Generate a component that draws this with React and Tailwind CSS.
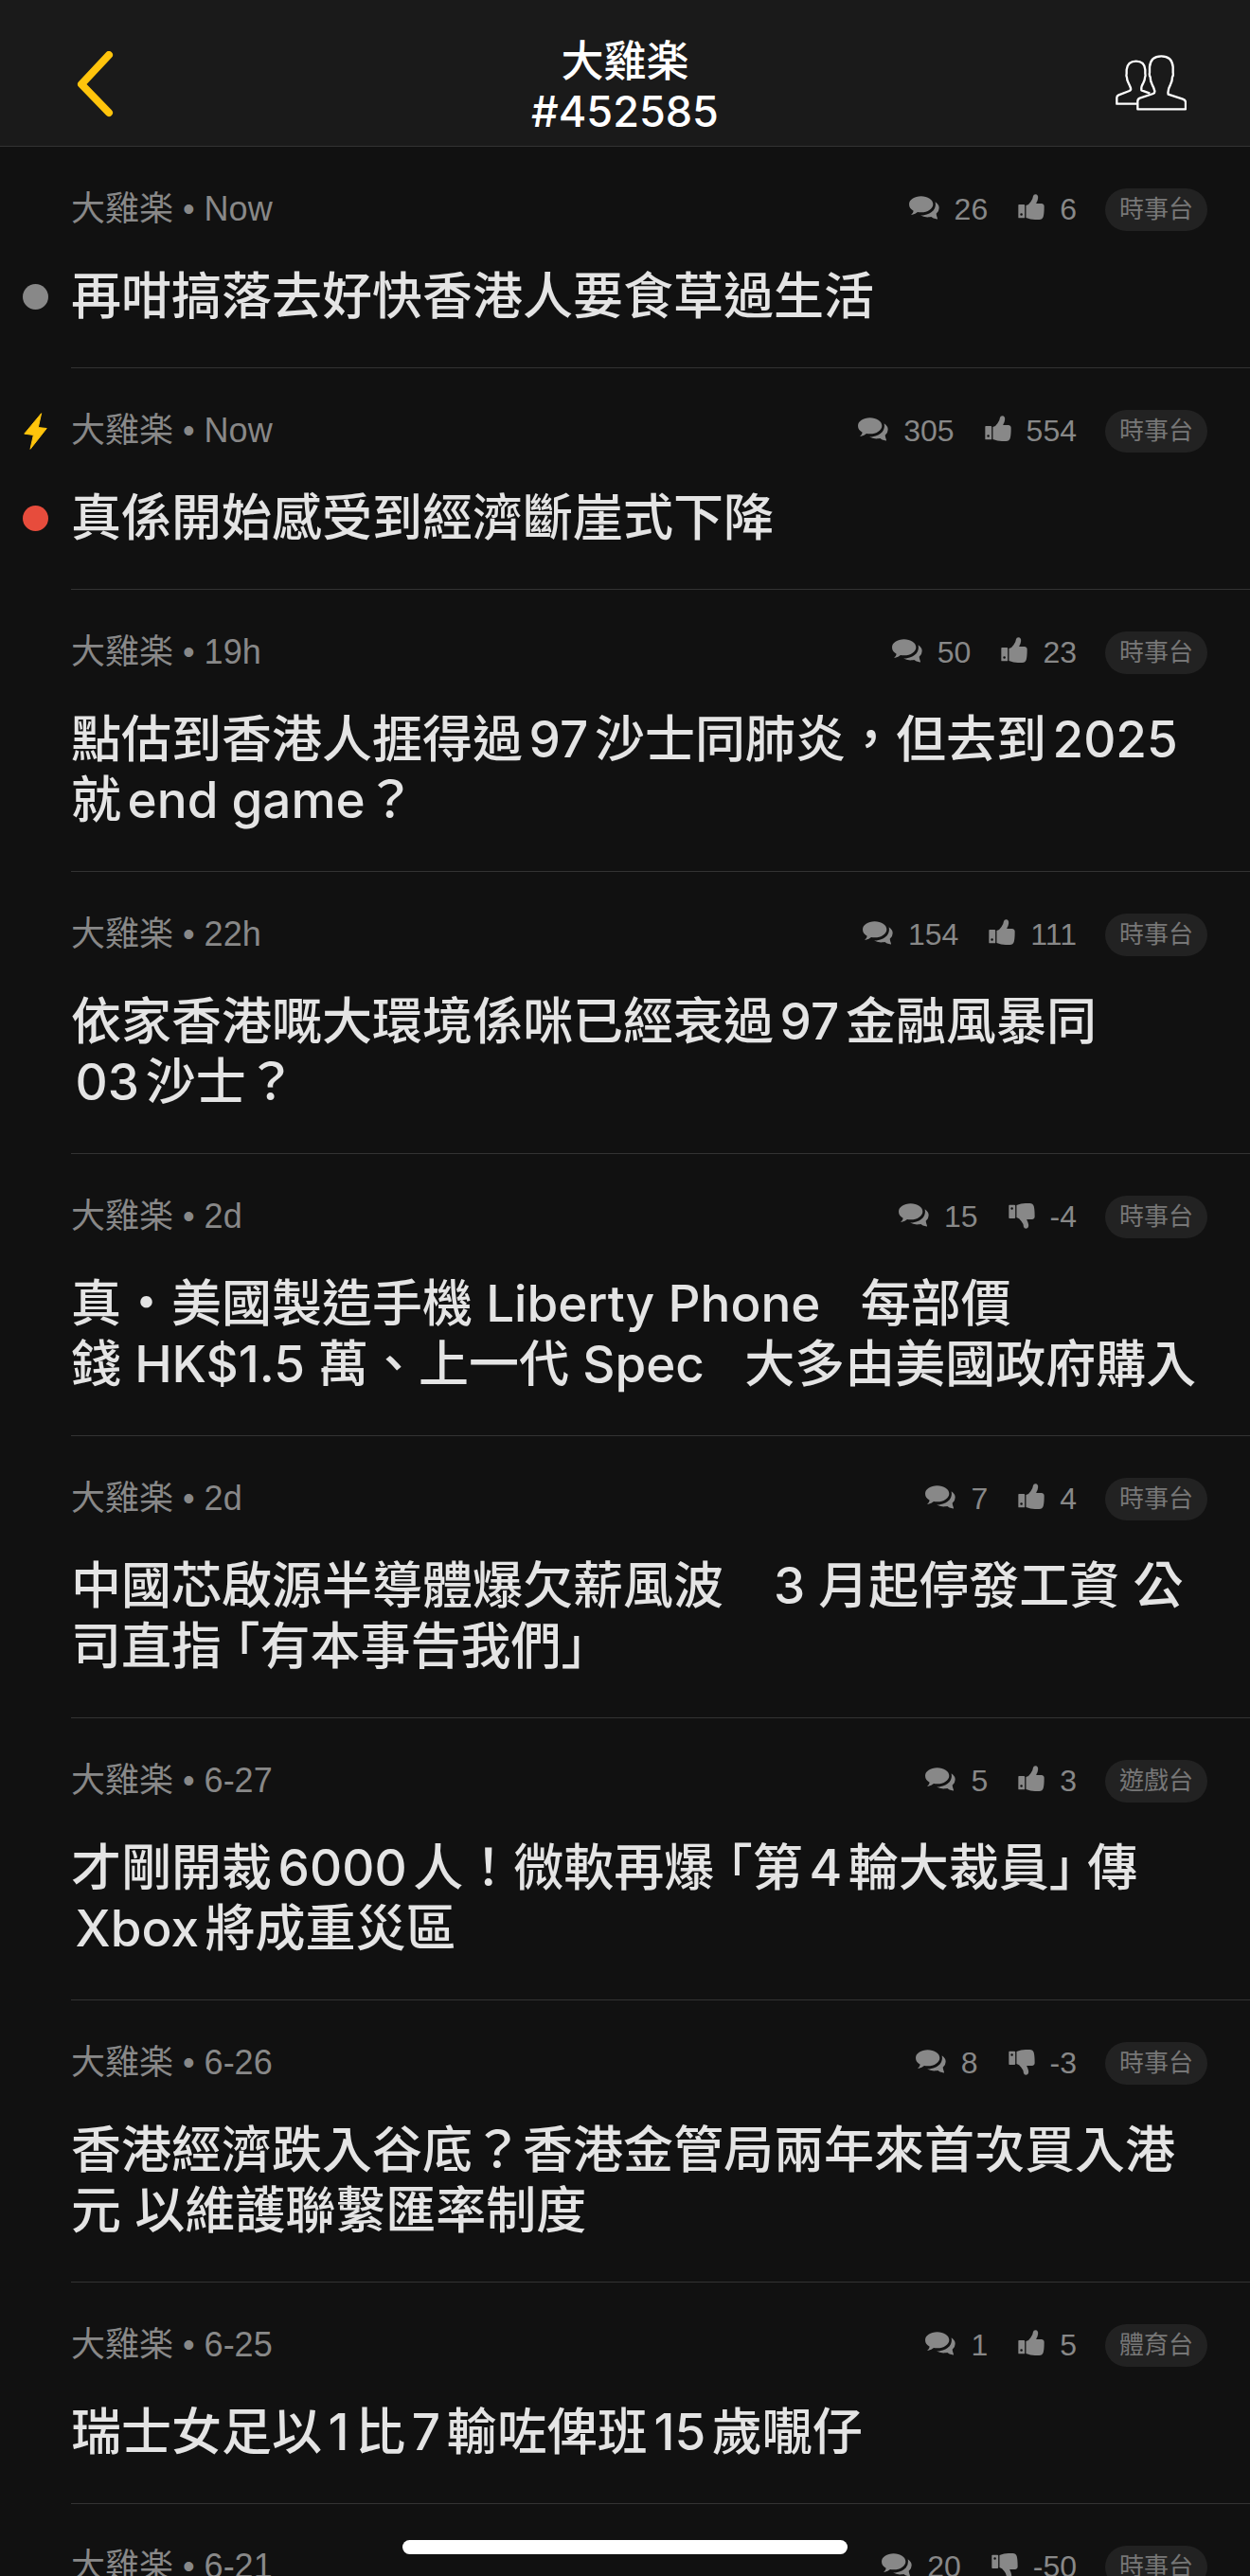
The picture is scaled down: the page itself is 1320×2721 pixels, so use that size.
import React from 'react';

const posts = [
    { id: 1, time: 'Now', comments: 26, votes: 6, board: '時事台', dot: 'read', title: ['再咁搞落去好快香港人要食草過生活'] },
    { id: 2, time: 'Now', comments: 305, votes: 554, board: '時事台', dot: 'unread', hot: true, title: ['真係開始感受到經濟斷崖式下降'] },
    { id: 3, time: '19h', comments: 50, votes: 23, board: '時事台', title: ['點估到香港人捱得過97沙士同肺炎，但去到2025', '就end game？'] },
    { id: 4, time: '22h', comments: 154, votes: 111, board: '時事台', title: ['依家香港嘅大環境係咪已經衰過97金融風暴同', '\u200a03沙士？'] },
    { id: 5, time: '2d', comments: 15, votes: -4, board: '時事台', title: ['真・美國製造手機 Liberty Phone\u00a0\u00a0 每部價', '錢 HK$1.5 萬、上一代 Spec\u00a0\u00a0 大多由美國政府購入'] },
    { id: 6, time: '2d', comments: 7, votes: 4, board: '時事台', title: ['中國芯啟源半導體爆欠薪風波\u30003 月起停發工資 公', '司直指「有本事告我們」'] },
    { id: 7, time: '6-27', comments: 5, votes: 3, board: '遊戲台', title: ['才剛開裁6000人！微軟再爆「第4輪大裁員」傳', '\u200aXbox將成重災區'] },
    { id: 8, time: '6-26', comments: 8, votes: -3, board: '時事台', title: ['香港經濟跌入谷底？香港金管局兩年來首次買入港', '元 以維護聯繫匯率制度'] },
    { id: 9, time: '6-25', comments: 1, votes: 5, board: '體育台', title: ['瑞士女足以1比7輸咗俾班15歲𡃁仔'] },
    { id: 10, time: '6-21', comments: 20, votes: -50, board: '時事台', title: [] },
];

const CommentsIcon = () => (
    <svg viewBox="20 36 96 75" className="w-8 h-[25px] mb-1" fill="currentColor" aria-hidden="true">
        <path d="M58 37c21 0 38 11 38 25S79 88 58 88q-6 0-11-1-6 6-19 9-2 0 0-2 5-5 6-11Q20 75 20 62c0-14 17-25 38-25z" />
        <path d="M103 55q12 8 12 19 0 11-9 18 1 8 4 15 0 4-4 2-10-2-16-7-4 1-8 1-16 1-27-6 6 1 12 0 19-3 30-15 9-11 6-27z" />
    </svg>
);

const ThumbIcon = ({ down }) => (
    <svg viewBox="36 28 84 83" className={down ? 'w-7 h-[27px] mb-0.5 -scale-y-100' : 'w-7 h-[27px] mb-1.5'} fill="currentColor" aria-hidden="true">
        <path fillRule="evenodd" d="M38 62h16q3 0 3 3v38q0 3-3 3H38q-2 0-2-3V65q0-3 2-3zm8 28a4 4 0 1 0 0 8 4 4 0 1 0 0-8z" />
        <path d="M61 65q9-2 15-12 7-8 8-18 1-6 8-6 9 1 8 12-1 8-5 15l-1 3h17q9 1 9 9 0 24-3 34-3 9-13 9H90q-14 0-29-6z" />
    </svg>
);

// Corner brackets sit half-width, tight against the quoted words
const TitleLine = ({ text }) => (
    <span className="block">
        {text.split(/([「」])/).map((part, i) => {
            if (part === '「') return <span key={i} className="ml-[14px] [font-feature-settings:'halt']">{part}</span>;
            if (part === '」') return <span key={i} className="mr-[14px] [font-feature-settings:'halt']">{part}</span>;
            return part;
        })}
    </span>
);

const Post = ({ post }) => (
    <li className="flex">
        {/* Status markers */}
        <div className="w-[75px] shrink-0 flex flex-col items-center pt-9">
            <div className="h-[60px] flex items-center">
                {post.hot && (
                    <svg viewBox="45 47 75 118" className="w-[25px] h-[39px]" fill="#ffc40c" stroke="#ffc40c" strokeWidth="3" strokeLinejoin="round" aria-hidden="true">
                        <path d="M101 49 47 114l29 4-10 45 52-66-27-3z" />
                    </svg>
                )}
            </div>
            <div className="mt-[30px] h-16 flex items-center">
                {post.dot && (
                    <span className={post.dot === 'unread' ? 'size-[27px] rounded-full bg-[#e74c3c]' : 'size-[27px] rounded-full bg-[#888888]'} />
                )}
            </div>
        </div>

        <article className="flex-1 min-w-0 border-b border-[#333333] pt-9 pb-[43px]">
            <div className="h-[60px] pr-[45px] flex items-center justify-between text-[#888888]">
                <p className="text-4xl">大雞楽 • {post.time}</p>
                <div className="flex items-center text-[32px]">
                    <span className="flex items-center gap-4 mr-8">
                        <CommentsIcon />
                        {post.comments}
                    </span>
                    <span className="flex items-center gap-4 mr-[30px]">
                        <ThumbIcon down={post.votes < 0} />
                        {post.votes}
                    </span>
                    <a href="#board" className="h-[45px] px-[15px] flex items-center rounded-full bg-[#222222] text-[26px] text-[#777777]">
                        {post.board}
                    </a>
                </div>
            </div>
            <h2 className="mt-[30px] min-h-16 font-['Inter','Noto_Sans_CJK_TC',sans-serif] font-medium text-[53px] leading-16 whitespace-nowrap text-[#e4e4e4] [text-autospace:normal]">
                {post.title.map((line) => (
                    <TitleLine key={line} text={line} />
                ))}
            </h2>
        </article>
    </li>
);

const App = () => {
    return (
        <div className="relative h-screen overflow-hidden bg-[#111111] font-['Liberation_Sans','Noto_Sans_CJK_TC',sans-serif]">
            <header className="h-[155px] pt-[38px] px-[67px] grid grid-cols-3 items-start bg-[#1a1a1a] border-b border-[#333333] text-white">
                <button type="button" aria-label="Back" className="justify-self-start mt-4 ml-[13px]">
                    <svg viewBox="0 0 40 70" className="w-10 h-[70px]" fill="none" stroke="#ffc40c" strokeWidth="8" strokeLinecap="round" strokeLinejoin="round">
                        <path d="M35 4 6 35l29 30" />
                    </svg>
                </button>
                <h1 className="text-center font-['Inter','Noto_Sans_CJK_TC',sans-serif] font-medium text-[45px] leading-[53px]">
                    大雞楽
                    <br />
                    #452585
                </h1>
                <button type="button" aria-label="Members" className="justify-self-end mt-5">
                    <svg viewBox="113 83 225 177" className="w-[75px] h-[59px]" fill="none" stroke="currentColor" strokeWidth="7" strokeLinejoin="round">
                        <path d="M181 238h-64v-20q0-5 6-8l34-13q6-3 4-9-3-8-8-18-4-8-4-15-3-6-1-13v-12q3-27 30-27t29 27v12q2 7-1 13 0 8-5 17-8 12-6 23l27 10" />
                        <path d="M183 255v-25q0-7 7-10l42-14q6-2 5-9-2-9-8-20-6-12-6-24-4-6-2-14v-18q3-34 37-34t37 34v18q2 8-2 14 0 12-6 24-10 18-7 31l46 15q9 3 9 10v22z" />
                    </svg>
                </button>
            </header>

            <ul>
                {posts.map((post) => (
                    <Post key={post.id} post={post} />
                ))}
            </ul>

            {/* Home indicator */}
            <div className="absolute bottom-[23px] left-1/2 w-[470px] h-[15px] -translate-x-1/2 rounded-full bg-white" />
        </div>
    );
};

export default App;
